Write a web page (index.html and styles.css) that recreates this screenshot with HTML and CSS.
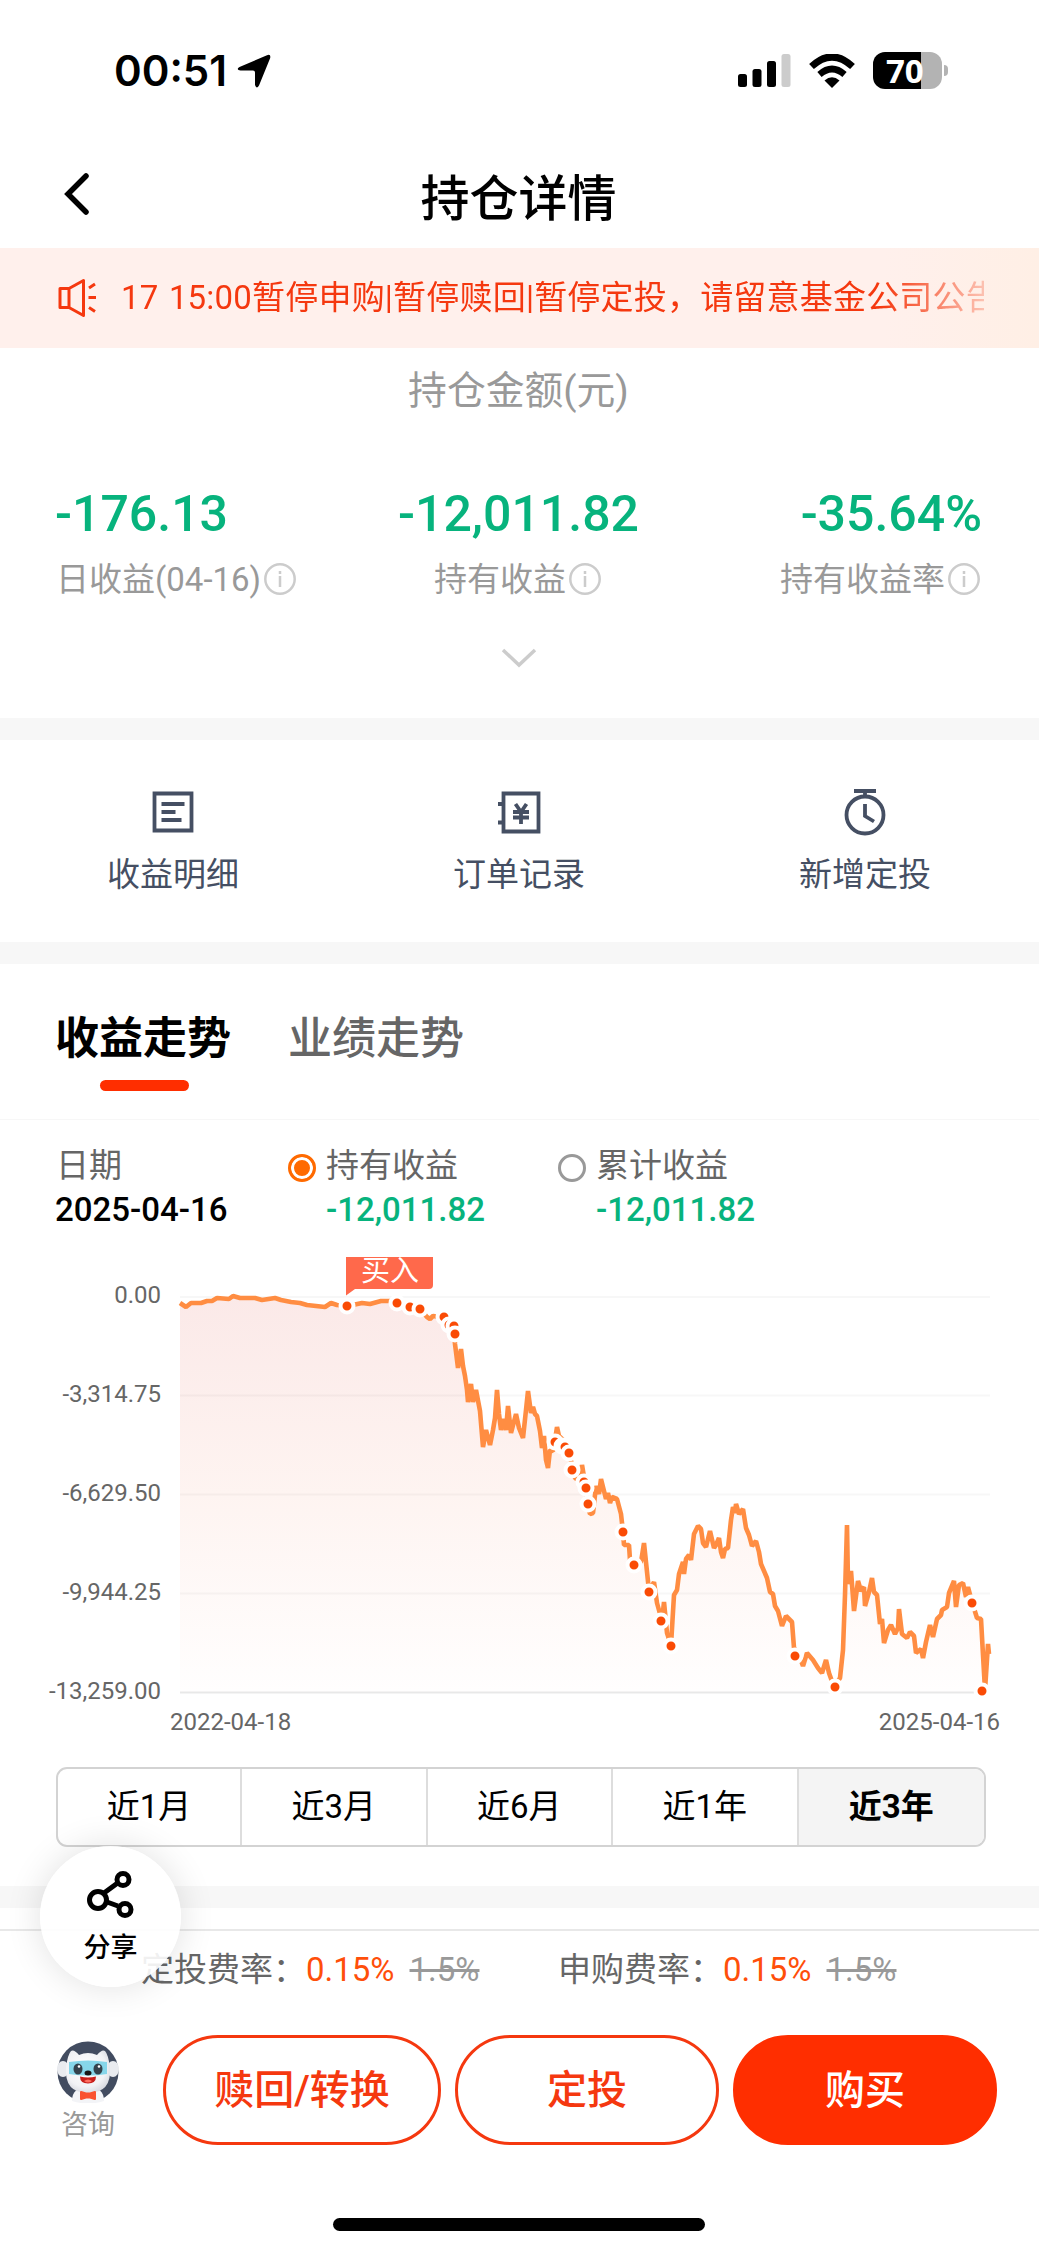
FILE: index.html
```
<!DOCTYPE html>
<html lang="zh-CN">
<head>
  <meta charset="UTF-8">
  <meta name="viewport" content="width=device-width, initial-scale=1.0">
  <title>持仓详情</title>
  <link rel="stylesheet" href="styles.css">
</head>
<body>
  <div class="status-bar">
    <div class="status-time">
      <span>00:51</span>
      <svg width="34" height="34" viewBox="0 0 34 34"><path d="M30 1.200Q34-.5 33.200 4L22 31.500Q19.500 35.500 18 31V18.500Q18 16.500 16 16.500H3.500Q-1.500 15.500 2.500 13Z"/></svg>
    </div>
    <div class="status-icons">
      <svg width="53" height="34" viewBox="0 0 53 34">
        <rect x="0" y="20" width="9" height="13" rx="2.500"/>
        <rect x="14.500" y="15" width="9" height="18" rx="2.500"/>
        <rect x="29" y="7" width="9" height="26" rx="2.500"/>
        <rect x="43.500" y="0" width="9" height="33" rx="2.500" fill="#ccc"/>
      </svg>
      <svg class="wifi" width="46" height="34" viewBox="0 0 46 34">
        <path d="M2.500 12.500Q23-6.500 43.500 12.500" fill="none" stroke="#000" stroke-width="7"/>
        <path d="M10.500 20.500Q23 9.500 35.500 20.500" fill="none" stroke="#000" stroke-width="6.500"/>
        <path d="M23 34l-7.500-7.500q7.500-6.500 15 0z"/>
      </svg>
      <div class="battery">70</div>
    </div>
  </div>

  <header class="nav">
    <svg class="back" width="26" height="42" viewBox="0 0 26 42"><path d="M22 3L4 21l18 18" fill="none" stroke="#000" stroke-width="5.500" stroke-linecap="round"/></svg>
    <h1>持仓详情</h1>
  </header>

  <div class="notice">
    <svg width="40" height="40" viewBox="0 0 40 40" fill="none" stroke="#f5380f" stroke-width="3" stroke-linejoin="round">
      <path d="M4 10.500h9L27.500 2.500v35L13 29.500H4zM13 10.500v19M33 10l6-4M32.500 19.500h7.500M33 29.500l6 4"/>
    </svg>
    <p class="notice-text">17 15:00暂停申购|暂停赎回|暂停定投，请留意基金公司公告</p>
  </div>

  <section class="summary">
    <h2>持仓金额(元)</h2>
    <div class="summary-row">
      <div class="summary-item">
        <strong>-176.13</strong>
        <span>日收益(04-16)<svg class="info" viewBox="0 0 32 32"><circle cx="16" cy="16" r="14.700"/><path d="M16 13v11M16 8v3"/></svg></span>
      </div>
      <div class="summary-item center">
        <strong>-12,011.82</strong>
        <span>持有收益<svg class="info" viewBox="0 0 32 32"><circle cx="16" cy="16" r="14.700"/><path d="M16 13v11M16 8v3"/></svg></span>
      </div>
      <div class="summary-item right">
        <strong>-35.64%</strong>
        <span>持有收益率<svg class="info" viewBox="0 0 32 32"><circle cx="16" cy="16" r="14.700"/><path d="M16 13v11M16 8v3"/></svg></span>
      </div>
    </div>
    <svg class="expand" width="36" height="20" viewBox="0 0 36 20"><path d="M2 2l16 15L34 2" fill="none" stroke="#ccc" stroke-width="3.500"/></svg>
  </section>

  <nav class="actions">
    <a class="action">
      <svg width="46" height="48" viewBox="0 0 46 48"><path d="M4.500 5.500h37v37h-37zM11.500 16h23M11.500 24h14M11.500 32h20"/></svg>
      收益明细
    </a>
    <a class="action">
      <svg width="46" height="48" viewBox="0 0 46 48"><path d="M7.500 5.500h35v38h-35zM2 16h6M2 34.500h6M19.500 16l5.500 8 5.500-8M25 23v13M17 24h16M17 29.500h16"/></svg>
      订单记录
    </a>
    <a class="action">
      <svg width="46" height="48" viewBox="0 0 46 48"><circle cx="23" cy="27" r="18.500"/><path d="M12 3h22M23 3v7M23 16v12l9 5.500"/></svg>
      新增定投
    </a>
  </nav>

  <section class="trend">
    <div class="tabs">
      <span class="tab active">收益走势</span>
      <span class="tab">业绩走势</span>
    </div>
    <div class="legend">
      <div class="legend-date">
        <span>日期</span>
        <b>2025-04-16</b>
      </div>
      <div class="legend-item checked">
        <i class="radio"></i>
        <span>持有收益</span>
        <b>-12,011.82</b>
      </div>
      <div class="legend-item">
        <i class="radio"></i>
        <span>累计收益</span>
        <b>-12,011.82</b>
      </div>
    </div>

    <svg class="chart" width="1039" height="490" viewBox="0 1257 1039 490">
      <defs>
        <linearGradient id="area" x1="0" y1="1297" x2="0" y2="1692" gradientUnits="userSpaceOnUse">
          <stop offset="0" stop-color="#fbe9e8"/>
          <stop offset=".5" stop-color="#fef4f1"/>
          <stop offset="1" stop-color="#fffefe"/>
        </linearGradient>
      </defs>
      <path id="fill" fill="url(#area)"/>
      <g class="grid">
        <path d="M180 1297H990M180 1395.500H990M180 1494.500H990M180 1593.500H990"/>
        <path class="axis" d="M180 1692.500H990"/>
      </g>
      <path id="line" class="line"/>
      <g id="points" class="points"></g>
      <path d="M346 1257h87v28q0 4-4 4h-74l-9 6.500z" fill="#ff694b"/>
      <text class="tag" x="361" y="1281">买入</text>
      <g class="y-labels">
        <text x="161" y="1303">0.00</text>
        <text x="161" y="1402">-3,314.75</text>
        <text x="161" y="1501">-6,629.50</text>
        <text x="161" y="1600">-9,944.25</text>
        <text x="161" y="1699">-13,259.00</text>
      </g>
      <text class="x-label" x="170" y="1730">2022-04-18</text>
      <text class="x-label end" x="1000" y="1730">2025-04-16</text>
    </svg>

    <div class="ranges">
      <span>近1月</span>
      <span>近3月</span>
      <span>近6月</span>
      <span>近1年</span>
      <span class="active">近3年</span>
    </div>
  </section>

  <footer class="footer">
    <div class="fees">
      <p class="fee">定投费率：<em>0.15%</em><del>1.5%</del></p>
      <p class="fee">申购费率：<em>0.15%</em><del>1.5%</del></p>
    </div>
    <div class="buttons">
      <div class="consult">
        <svg width="62" height="62" viewBox="0 0 62 62">
          <defs>
            <radialGradient id="fur" cx=".45" cy=".4" r=".65">
              <stop offset="0" stop-color="#fff"/>
              <stop offset=".7" stop-color="#f1f2f5"/>
              <stop offset="1" stop-color="#d4d7de"/>
            </radialGradient>
          </defs>
          <circle cx="31" cy="31" r="30.500" fill="#424c60"/>
          <path d="M15 60q0-14 16-14t16 14q-16 5-32 0z" fill="#f3f4f7"/>
          <ellipse cx="6" cy="28" rx="6" ry="8" fill="#e9ebef"/>
          <ellipse cx="56" cy="28" rx="6" ry="8" fill="#e9ebef"/>
          <path d="M9 26q2-13 5-16 3-2 8 4 9-4 18 0 5-6 8-4 3 3 5 16 2 26-22 26T9 26z" fill="url(#fur)"/>
          <path d="M12 21q19-3 38 0v12q-19 3-38 0z" fill="#86d6ea"/>
          <ellipse cx="21" cy="28" rx="4.500" ry="5.500" fill="#34424d"/>
          <ellipse cx="41" cy="28" rx="4.500" ry="5.500" fill="#34424d"/>
          <circle cx="22" cy="25.500" r="1.300" fill="#fff"/>
          <circle cx="42" cy="25.500" r="1.300" fill="#fff"/>
          <ellipse cx="31" cy="32" rx="3.500" ry="2.500" fill="#171717"/>
          <path d="M23 35.500q8 2 16 0 0 7-8 7t-8-7z" fill="#c71f1b"/>
          <path d="M27 40q4-3 8 0-4 3-8 0z" fill="#ff6f61"/>
          <path d="M24 51l5 1.500h4l5-1.500v7l-5-1.500h-4l-5 1.500z" fill="#fa5230" stroke="#fa5230" stroke-width="2" stroke-linejoin="round"/>
        </svg>
        咨询
      </div>
      <button class="btn wide">赎回/转换</button>
      <button class="btn">定投</button>
      <button class="btn primary">购买</button>
    </div>
    <div class="home-indicator"></div>
  </footer>

  <div class="share">
    <svg width="48" height="48" viewBox="0 0 48 48" fill="none" stroke="#000" stroke-width="5">
      <path d="M17 22L32 11M20 31l11 4"/>
      <circle cx="11" cy="29" r="8.500"/>
      <circle cx="36" cy="8.500" r="6"/>
      <circle cx="38" cy="38.500" r="6"/>
    </svg>
    分享
  </div>

  <script src="chart.js"></script>
</body>
</html>
```
FILE: styles.css
```
* {
  padding: 0;
  margin: 0;
  box-sizing: border-box;
}

body {
  position: relative;
  width: 1039px;
  height: 2250px;
  overflow: hidden;
  background: #fff;
  color: #000;
  font-family: Roboto, "Noto Sans CJK SC", sans-serif;
  font-size: 33px;
}

svg {
  display: block;
  flex-shrink: 0;
}

/* Status bar */
.status-bar {
  height: 140px;
  padding: 1px 97px 0 114px;
  display: flex;
  justify-content: space-between;
  align-items: center;
}

.status-time {
  display: flex;
  align-items: center;
  gap: 10px;
  font: 600 42px/1 Inter, sans-serif;
}

.status-icons {
  display: flex;
  align-items: center;
}

.wifi {
  margin: 0 18px;
}

.battery {
  position: relative;
  width: 69px;
  height: 37px;
  padding-left: 13px;
  border-radius: 12px;
  background: linear-gradient(90deg, #000 48px, #b3b3b3 48px);
  color: #fff;
  font: 700 33px/37px "Open Sans", sans-serif;
}

.battery::after {
  content: "";
  position: absolute;
  left: 71px;
  top: 13px;
  width: 4px;
  height: 11px;
  border-radius: 0 4px 4px 0;
  background: #b3b3b3;
}

/* Header */
.nav {
  height: 108px;
  padding: 0 65px 0 64px;
  display: flex;
  align-items: center;
}

.nav h1 {
  flex: 1;
  margin-right: 27px;
  text-align: center;
  font-size: 49px;
  font-weight: 500;
}

.notice {
  height: 100px;
  padding: 0 55px 0 56px;
  display: flex;
  align-items: center;
  gap: 25px;
  background: linear-gradient(90deg, #fff0ec 85%, #ffefe5);
}

.notice-text {
  flex: 1;
  padding-bottom: 7px;
  overflow: hidden;
  white-space: nowrap;
  color: #f5380f;
  letter-spacing: .2px;
  word-spacing: 2px;
  -webkit-mask-image: linear-gradient(90deg, #000 88%, rgba(0, 0, 0, .25));
}

/* Holding summary */
.summary {
  height: 392px;
  padding: 15px 57px 0 55px;
  border-bottom: 22px solid #f7f7f7;
}

.summary h2 {
  line-height: 56px;
  text-align: center;
  color: #999;
  font-size: 38.8px;
  font-weight: 400;
}

.summary-row {
  margin-top: 63px;
  display: flex;
}

.summary-item {
  flex: 1;
  display: flex;
  flex-direction: column;
  align-items: flex-start;
}

.summary-item.center {
  align-items: center;
}

.summary-item.right {
  align-items: flex-end;
}

.summary-item strong {
  line-height: 64px;
  color: #07b37d;
  font-size: 50px;
  font-weight: 500;
}

.summary-item span {
  height: 62px;
  display: flex;
  align-items: center;
  gap: 3px;
  color: #999;
}

.summary-item:first-child span {
  padding-left: 1px;
}

.summary-item.center span,
.summary-item.right span {
  padding-right: 2px;
}

.info {
  width: 32px;
  height: 32px;
  margin-top: 3px;
  fill: none;
  stroke: #ccc;
  stroke-width: 2.5;
}

.expand {
  margin: 40px auto 0;
}

/* Shortcuts */
.actions {
  height: 224px;
  padding: 48px 1px 0 0;
  display: flex;
  border-bottom: 22px solid #f7f7f7;
}

.action {
  flex: 1;
  display: flex;
  flex-direction: column;
  align-items: center;
  gap: 13px;
  line-height: 52px;
  color: #454f63;
}

.action svg {
  fill: none;
  stroke: #454f63;
  stroke-width: 3.8;
}

/* Trend */
.trend {
  height: 944px;
  border-bottom: 22px solid #f7f7f7;
}

.tabs {
  height: 156px;
  padding: 43px 56px 0 55px;
  display: flex;
  gap: 57px;
  border-bottom: 1px solid #f7f7f7;
}

.tab {
  color: #666;
  font-size: 44px;
  font-weight: 500;
  line-height: 64px;
}

.tab.active {
  color: #000;
  font-weight: 700;
}

.tab.active::after {
  content: "";
  display: block;
  width: 89px;
  height: 11px;
  margin: 9px auto 0 45px;
  border-radius: 6px;
  background: #ff2e00;
}

.legend {
  height: 137px;
  padding: 24px 56px 0 55px;
  display: flex;
  line-height: 44px;
  color: #666;
}

.legend-date {
  width: 233px;
}

.legend-date span {
  padding-left: 1px;
}

.legend-item {
  width: 270px;
  display: grid;
  grid-template-columns: 38px 1fr;
  align-content: start;
}

.legend b {
  grid-column: 2;
  display: block;
  color: #07b37d;
  font-weight: 500;
}

.legend-date b {
  color: #000;
}

.radio {
  width: 28px;
  height: 28px;
  margin-top: 10px;
  border: 3px solid #999;
  border-radius: 50%;
}

.checked .radio {
  border-color: #ff6a00;
  background: #ff6a00;
  box-shadow: inset 0 0 0 3px #fff;
}

.grid {
  stroke: #000;
  stroke-opacity: .03;
  stroke-width: 2;
}

.axis {
  stroke-opacity: .09;
}

.line {
  fill: none;
  stroke: #ff8d42;
  stroke-width: 4.6;
  stroke-linejoin: bevel;
}

.points {
  fill: #fa4b05;
  stroke: #fff;
  stroke-width: 4;
}

.tag {
  fill: #fff;
  font-size: 29px;
}

.y-labels,
.x-label {
  fill: #666;
  font-size: 24px;
}

.y-labels,
.x-label.end {
  text-anchor: end;
}

.ranges {
  height: 80px;
  margin: 20px 53px 0 56px;
  display: flex;
  border: 2px solid #d3d3d3;
  border-radius: 11px;
  overflow: hidden;
}

.ranges span {
  width: 185.5px;
  text-align: center;
  line-height: 75px;
}

.ranges span:first-child {
  width: 182px;
}

.ranges span + span {
  border-left: 2px solid #ddd;
}

.ranges .active {
  flex: 1;
  background: #f4f4f4;
  font-weight: 700;
}

/* Bottom bar */
.footer {
  height: 321px;
  margin-top: 21px;
  border-top: 2px solid #e8e8e8;
}

.fees {
  height: 104px;
  padding-left: 141px;
  display: flex;
  line-height: 78px;
  color: #666;
}

.fee {
  width: 417px;
  white-space: nowrap;
}

.fee em {
  color: #ff4f0a;
  font-style: normal;
}

.fee del {
  margin-left: 15px;
  color: #999;
}

.buttons {
  padding: 0 42px 0 56px;
  display: flex;
}

.consult {
  width: 64px;
  height: 110px;
  padding-top: 6px;
  margin-right: 43px;
  display: flex;
  flex-direction: column;
  align-items: center;
  color: #999;
  font-size: 27px;
  line-height: 44px;
}

.btn {
  width: 264px;
  height: 110px;
  margin-right: 14px;
  padding-bottom: 6px;
  border: 3px solid #f5380f;
  border-radius: 55px;
  background: #fff;
  color: #f5380f;
  font-family: inherit;
  font-size: 40px;
  font-weight: 500;
}

.btn.wide {
  width: 278px;
}

.btn.primary {
  margin-right: 0;
  border-color: #ff2e00;
  background: #ff2e00;
  color: #fff;
}

.home-indicator {
  width: 372px;
  height: 13px;
  margin: 73px 0 0 333px;
  border-radius: 7px;
  background: #000;
}

/* Floating share button */
.share {
  position: absolute;
  left: 40px;
  top: 1846px;
  width: 141px;
  height: 141px;
  padding-top: 25px;
  display: flex;
  flex-direction: column;
  align-items: center;
  border-radius: 50%;
  background: rgba(255, 255, 255, .9);
  box-shadow: 0 0 36px rgba(0, 0, 0, .12);
  font-size: 27px;
  font-weight: 500;
  line-height: 59px;
}
```
FILE: chart.js
```
// Profit curve, 2022-04-18 to 2025-04-16, as x,y pairs
const curve = [
  180,1303, 186,1307, 191,1303, 201,1303, 207,1301, 212,1301, 217,1298, 229,1299, 233,1296, 240,1298, 255,1298, 262,1300, 275,1298, 281,1300, 291,1302, 300,1303, 307,1305, 325,1307, 331,1303, 337,1305, 348,1306, 362,1303, 370,1304, 381,1301, 390,1301, 397,1303,
  410,1307, 420,1309, 427,1317, 430,1319, 433,1316, 440,1317, 444,1318, 447,1324, 454,1330, 455,1344, 458,1368, 461,1349, 463,1366, 465,1376, 467,1390, 468,1402, 471,1384, 473,1402, 476,1390, 480,1411, 483,1447, 486,1430, 490,1445, 493,1430, 495,1418, 497,1390, 499,1414, 501,1430, 504,1419, 506,1430, 508,1406, 511,1433, 516,1414, 519,1428, 523,1438, 526,1410, 528,1391, 531,1413, 533,1407, 535,1414, 537,1416, 540,1431, 542,1448, 544,1436, 546,1460, 548,1468, 550,1450, 553,1451, 555,1440, 557,1427, 559,1436, 563,1440, 566,1448, 569,1453, 571,1461, 575,1478, 580,1480, 582,1465, 584,1477, 586,1488, 587,1503, 590,1514, 593,1513, 596,1486, 599,1494, 601,1479, 604,1491, 606,1499, 608,1493, 610,1503, 612,1497, 617,1499, 621,1514, 623,1532, 624,1545, 629,1545, 630,1560,
  634,1565, 641,1562, 644,1543, 649,1591, 654,1582, 657,1603, 662,1621, 664,1602, 667,1633, 671,1645, 674,1595, 677,1590, 679,1574, 683,1562, 684,1574, 686,1559, 689,1555, 691,1560, 694,1534, 698,1526, 701,1529, 703,1543, 706,1547, 710,1531, 714,1548, 716,1545, 719,1538, 721,1552, 723,1558, 725,1549, 728,1548, 731,1520, 733,1507, 735,1513, 736,1504, 739,1514, 743,1509, 746,1528, 749,1535, 752,1546, 756,1541, 759,1552, 761,1564, 767,1578, 770,1592, 773,1594, 775,1606, 778,1611, 782,1626, 786,1616, 790,1620, 792,1622, 794,1648, 798,1653, 803,1666, 807,1653, 813,1660, 818,1668, 822,1673, 826,1660, 829,1673, 834,1687, 840,1678, 843,1650, 845,1595, 847,1525, 848,1584, 851,1571, 854,1611, 858,1581, 861,1591, 864,1587, 865,1606, 869,1592, 872,1578, 874,1592, 877,1595, 880,1624, 882,1619, 884,1643, 888,1630, 891,1625, 895,1634, 898,1628, 899,1609, 902,1634, 907,1638, 910,1632, 914,1636, 916,1653, 921,1649, 923,1658, 926,1642, 930,1625, 933,1637, 937,1619, 941,1615, 942,1610, 947,1607, 949,1593, 954,1581, 956,1607, 959,1585, 963,1583, 966,1597, 968,1587, 972,1602, 977,1618, 981,1619, 983,1655, 985,1690, 988,1644, 989,1654
];

// Days with a buy order
const orders = [
  [347,1306], [397,1303], [410,1307], [420,1309], [444,1317], [449,1325], [454,1326], [455,1334],
  [555,1442], [562,1446], [565,1447], [569,1453], [572,1470], [584,1482], [586,1488], [588,1504],
  [623,1532], [634,1565], [649,1592], [661,1621], [671,1646], [795,1656], [835,1687], [972,1603], [982,1691]
];

const path = 'M' + curve.join(' ');
document.getElementById('line').setAttribute('d', path);
document.getElementById('fill').setAttribute('d', path + ' V1692 H180 Z');

document.getElementById('points').innerHTML = orders
  .map(([x, y]) => `<circle cx="${x}" cy="${y}" r="6.500"/>`)
  .join('');
```
